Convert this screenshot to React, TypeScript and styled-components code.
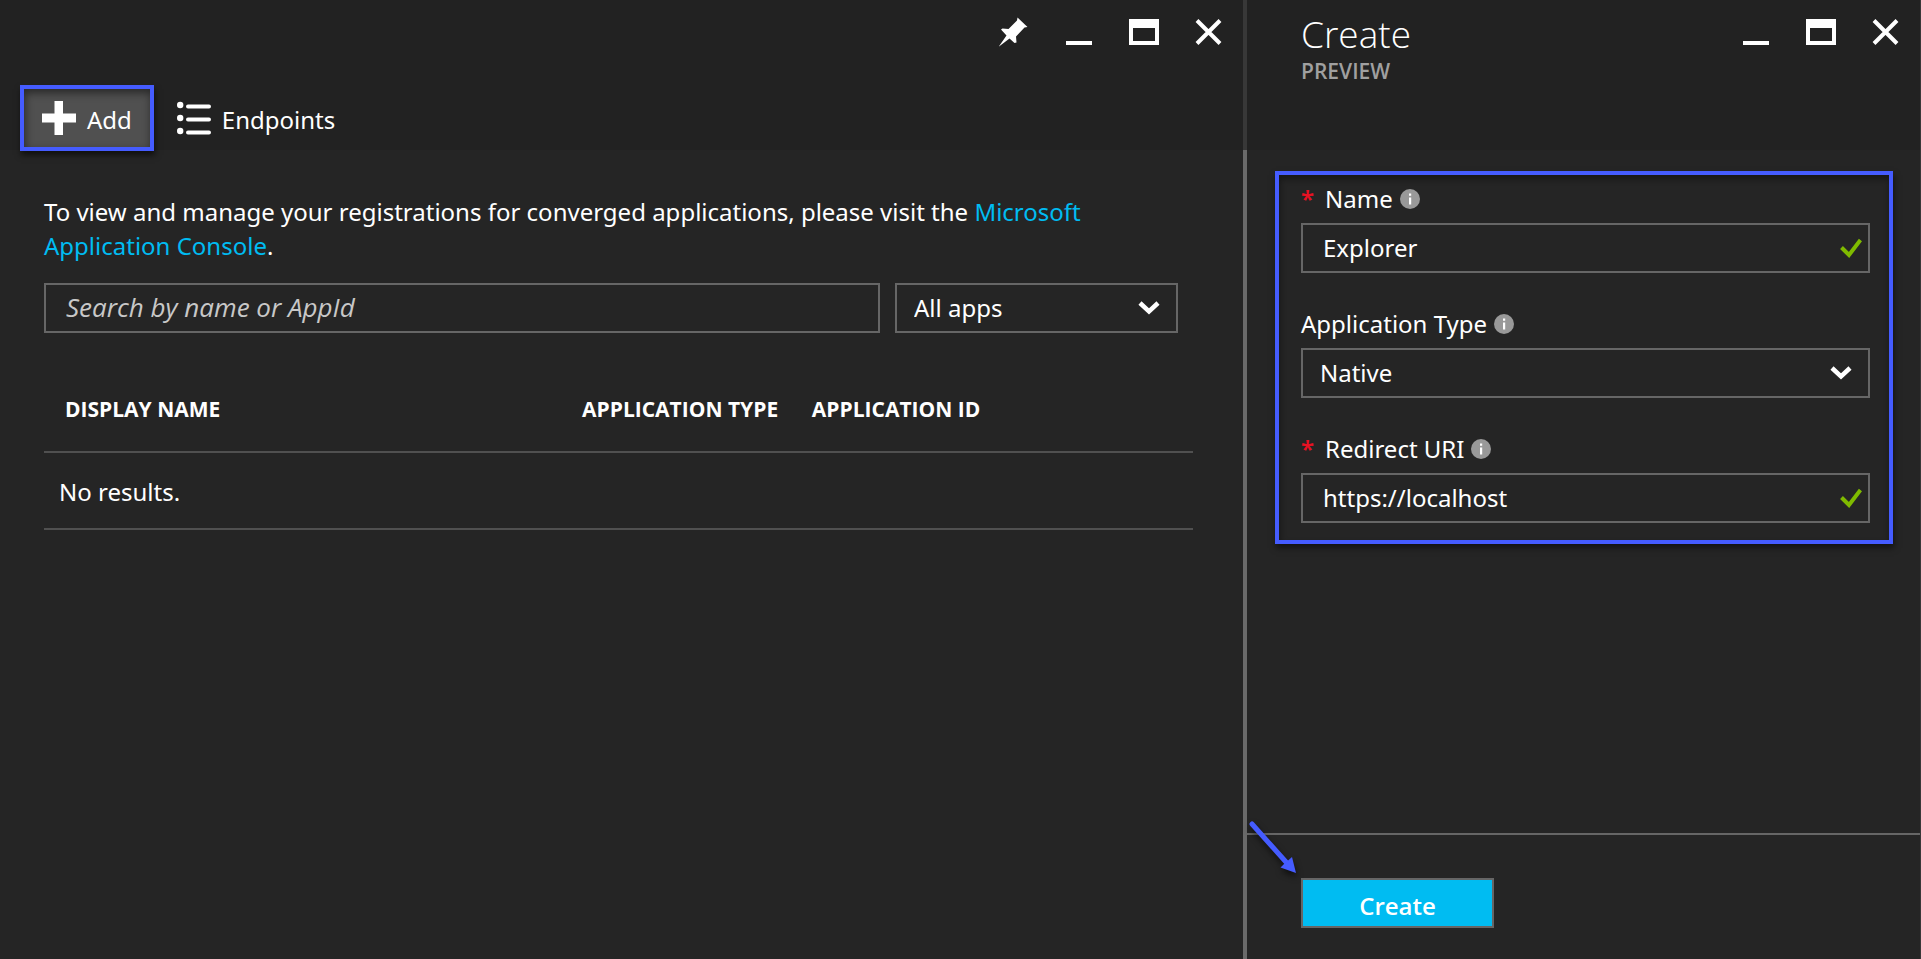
import React from "react";
import styled, { createGlobalStyle } from "styled-components";

const GlobalStyle = createGlobalStyle`
  * { box-sizing: border-box; }
  body {
    margin: 0;
    background: #252525;
    color: #fff;
    font-family: "Segoe UI", "Noto Sans", "Open Sans", sans-serif;
    font-size: 24px;
    line-height: 34px;
  }
  button, input, select { font: inherit; color: inherit; }
`;

const Portal = styled.div`
  display: grid;
  grid-template-columns: minmax(0, 1243fr) minmax(0, 678fr);
  min-height: 100vh;
`;

const Blade = styled.section<{ $divided?: boolean }>`
  display: flex;
  flex-direction: column;
  border-left: ${(p) => (p.$divided ? "4px solid #6a6a6a" : "0")};
  border-right: ${(p) => (p.$divided ? "1px solid #383838" : "0")};
`;

const Header = styled.header<{ $divided?: boolean }>`
  position: relative;
  height: 150px;
  background: #222;
  margin-left: ${(p) => (p.$divided ? "-4px" : "0")};
  border-left: ${(p) => (p.$divided ? "4px solid #383838" : "0")};
`;

const TitleBar = styled.div`
  display: flex;
  justify-content: space-between;
  height: 85px;
  padding: 0 2px 0 54px;
`;

const Title = styled.h1`
  margin: 0;
  padding-top: 12px;
  font-family: "Segoe UI", "Open Sans", sans-serif;
  font-size: 37px;
  font-weight: 300;
  line-height: 44px;
`;

const Subtitle = styled.p`
  margin: 0;
  color: #a0a0a0;
  font-family: "Segoe UI", "Open Sans", sans-serif;
  font-size: 21px;
  font-weight: 600;
  line-height: 30px;
`;

const Controls = styled.div`
  display: flex;
  height: 64px;
  margin-left: auto;
`;

const IconButton = styled.button`
  display: flex;
  align-items: center;
  justify-content: center;
  width: 65px;
  padding: 0;
  border: 0;
  background: none;
  cursor: pointer;
`;

const Toolbar = styled.div`
  display: flex;
  gap: 4px;
  padding-left: 20px;
`;

const Command = styled.button<{ $marked?: boolean }>`
  display: flex;
  align-items: center;
  gap: 11px;
  height: 66px;
  padding: 0 ${(p) => (p.$marked ? "18px" : "19px")};
  border: ${(p) => (p.$marked ? "4px solid #455cff" : "0")};
  background: ${(p) => (p.$marked ? "#505050" : "none")};
  box-shadow: ${(p) =>
    p.$marked
      ? "1px 4px 6px rgba(0, 0, 0, 0.6), inset 1px 4px 8px rgba(0, 0, 0, 0.5)"
      : "none"};
  cursor: pointer;
`;

const CommandText = styled.span`
  padding-top: 3px;
`;

const Content = styled.div`
  padding: 45px 50px 0 44px;
`;

const Intro = styled.p`
  max-width: 1100px;
  margin: 0;
`;

const Link = styled.a`
  color: #00bcf2;
  text-decoration: none;
`;

const Filters = styled.div`
  display: grid;
  grid-template-columns: minmax(0, 836fr) minmax(0, 283fr);
  gap: 15px;
  padding: 20px 15px 0 0;
`;

const Field = styled.div`
  position: relative;
  display: flex;
`;

const TextInput = styled.input`
  width: 100%;
  height: 50px;
  padding: 0 50px 2px 20px;
  border: 2px solid #666;
  border-radius: 0;
  background: #252525;
  outline: 0;
  &:focus { border-color: #00bcf2; }
  &::placeholder {
    color: #c8c8c8;
    font-style: italic;
    opacity: 1;
  }
`;

const SearchInput = styled(TextInput)`
  font-family: "Segoe UI", "Open Sans", sans-serif;
  font-size: 26px;
`;

const Select = styled.select`
  width: 100%;
  height: 50px;
  padding: 0 50px 0 17px;
  border: 2px solid #666;
  border-radius: 0;
  background: #252525;
  appearance: none;
  outline: 0;
  &:focus { border-color: #00bcf2; }
`;

const FieldIcon = styled.span<{ $right: number }>`
  position: absolute;
  top: 0;
  bottom: 0;
  right: ${(p) => p.$right}px;
  display: flex;
  align-items: center;
  pointer-events: none;
`;

const Table = styled.table`
  width: 100%;
  margin-top: 37px;
  border-collapse: collapse;
  table-layout: fixed;
`;

const HeadCell = styled.th<{ $width?: string }>`
  width: ${(p) => p.$width ?? "auto"};
  height: 82px;
  padding: 0 0 4px 21px;
  border-bottom: 2px solid #505050;
  font-family: "Segoe UI", "Open Sans", sans-serif;
  font-size: 21px;
  font-weight: 700;
  text-align: left;
  white-space: nowrap;
`;

const Cell = styled.td`
  height: 77px;
  padding: 2px 0 0 15px;
  border-bottom: 2px solid #505050;
`;

const Form = styled.form`
  display: flex;
  flex: 1;
  flex-direction: column;
  justify-content: space-between;
`;

const MarkedFields = styled.div`
  display: flex;
  flex-direction: column;
  gap: 35px;
  margin: 21px 27px 21px 28px;
  padding: 8px 19px 17px 22px;
  border: 4px solid #455cff;
  box-shadow: 1px 4px 6px rgba(0, 0, 0, 0.5), inset 1px 4px 6px rgba(0, 0, 0, 0.4);
`;

const LabelRow = styled.div`
  display: flex;
  align-items: center;
  height: 40px;
  padding-bottom: 8px;
`;

const Required = styled.span`
  width: 24px;
  color: #e81123;
  font-weight: 600;
`;

const Info = styled.span`
  display: flex;
  margin-left: 7px;
`;

const Footer = styled.footer`
  position: relative;
  padding: 43px 54px 31px;
  border-top: 2px solid #666;
`;

const CreateButton = styled.button`
  width: 193px;
  height: 50px;
  padding: 6px 0 0;
  border: 2px solid #666;
  background: #00bcf2;
  font-family: "Segoe UI", "Open Sans", sans-serif;
  font-weight: 600;
  line-height: 40px;
  cursor: pointer;
`;

const Pointer = styled.svg`
  position: absolute;
  top: -18px;
  left: -2px;
  filter: drop-shadow(1px 4px 3px rgba(0, 0, 0, 0.6));
`;

const PinIcon = () => (
  <svg width="30" height="30" viewBox="0 0 30 30" fill="#fff" aria-hidden="true">
    <path d="M18.500 0.500L28.500 10L25.500 10.500L17 19.500L17.500 25.500L15.500 26L10.500 21.500L-0.500 30L7.500 18.500L2 12.500L3.500 11.500L9.500 12L18 3.500Z" />
  </svg>
);

const MinimizeIcon = () => (
  <svg width="30" height="30" viewBox="0 0 30 30" fill="#fff" aria-hidden="true">
    <rect x="2" y="24" width="26" height="4" />
  </svg>
);

const MaximizeIcon = () => (
  <svg width="30" height="30" viewBox="0 0 30 30" fill="#fff" aria-hidden="true">
    <path fillRule="evenodd" d="M0 2H30V28H0ZM4 11V24H26V11Z" />
  </svg>
);

const CloseIcon = () => (
  <svg width="30" height="30" viewBox="0 0 30 30" stroke="#fff" strokeWidth="4" aria-hidden="true">
    <path d="M3 3.500L26 26.500M26 3.500L3 26.500" />
  </svg>
);

const PlusIcon = () => (
  <svg width="34" height="34" viewBox="0 0 34 34" fill="#fff" aria-hidden="true">
    <path d="M12.500 0H21V12.500H34V21.500H21V34H12.500V21.500H0V12.500H12.500Z" />
  </svg>
);

const ListIcon = () => (
  <svg width="34" height="34" viewBox="0 0 34 34" fill="#fff" aria-hidden="true">
    {[5, 18, 31].map((y) => (
      <g key={y}>
        <circle cx="3.200" cy={y - 1} r="3.200" />
        <rect x="9" y={y - 1.5} width="25" height="4" rx="2" />
      </g>
    ))}
  </svg>
);

const ChevronIcon = () => (
  <svg width="22" height="14" viewBox="0 0 22 14" fill="none" stroke="#fff" strokeWidth="4.500" aria-hidden="true">
    <path d="M2 2L11 10.500L20 2" />
  </svg>
);

const CheckIcon = () => (
  <svg width="22" height="20" viewBox="0 0 22 20" fill="none" stroke="#7fba00" strokeWidth="4" aria-hidden="true">
    <path d="M1.500 9.500L9 17L20.500 2" />
  </svg>
);

const InfoIcon = () => (
  <Info title="More information">
    <svg width="20" height="20" viewBox="0 0 20 20" aria-hidden="true">
      <circle cx="10" cy="10" r="10" fill="#999" />
      <path d="M9 4.500h2.200v2.200h-2.200zM9 8.500h2.200v7h-2.200z" fill="#fff" />
    </svg>
  </Info>
);

function WindowControls({ pinnable }: { pinnable?: boolean }) {
  return (
    <Controls>
      {pinnable && (
        <IconButton type="button" aria-label="Pin"><PinIcon /></IconButton>
      )}
      <IconButton type="button" aria-label="Minimize"><MinimizeIcon /></IconButton>
      <IconButton type="button" aria-label="Maximize"><MaximizeIcon /></IconButton>
      <IconButton type="button" aria-label="Close"><CloseIcon /></IconButton>
    </Controls>
  );
}

interface FormFieldProps {
  id: string;
  label: string;
  required?: boolean;
  children: React.ReactNode;
}

function FormField({ id, label, required, children }: FormFieldProps) {
  return (
    <div>
      <LabelRow>
        {required && <Required>*</Required>}
        <label htmlFor={id}>{label}</label>
        <InfoIcon />
      </LabelRow>
      <Field>{children}</Field>
    </div>
  );
}

function RegistrationsBlade() {
  return (
    <Blade>
      <Header>
        <TitleBar>
          <WindowControls pinnable />
        </TitleBar>
        <Toolbar>
          <Command type="button" $marked>
            <PlusIcon />
            <CommandText>Add</CommandText>
          </Command>
          <Command type="button">
            <ListIcon />
            <CommandText>Endpoints</CommandText>
          </Command>
        </Toolbar>
      </Header>
      <Content>
        <Intro>
          To view and manage your registrations for converged applications, please visit the{" "}
          <Link href="#console">Microsoft Application Console</Link>.
        </Intro>
        <Filters>
          <SearchInput type="search" aria-label="Search" placeholder="Search by name or AppId" />
          <Field>
            <Select aria-label="Filter" defaultValue="all">
              <option value="all">All apps</option>
              <option value="mine">My apps</option>
            </Select>
            <FieldIcon $right={18}><ChevronIcon /></FieldIcon>
          </Field>
        </Filters>
        <Table>
          <thead>
            <tr>
              <HeadCell $width="45%">DISPLAY NAME</HeadCell>
              <HeadCell $width="20%">APPLICATION TYPE</HeadCell>
              <HeadCell>APPLICATION ID</HeadCell>
            </tr>
          </thead>
          <tbody>
            <tr>
              <Cell colSpan={3}>No results.</Cell>
            </tr>
          </tbody>
        </Table>
      </Content>
    </Blade>
  );
}

function CreateBlade() {
  return (
    <Blade $divided>
      <Header $divided>
        <TitleBar>
          <div>
            <Title>Create</Title>
            <Subtitle>PREVIEW</Subtitle>
          </div>
          <WindowControls />
        </TitleBar>
      </Header>
      <Form onSubmit={(e) => e.preventDefault()}>
        <MarkedFields>
          <FormField id="name" label="Name" required>
            <TextInput id="name" defaultValue="Explorer" />
            <FieldIcon $right={8}><CheckIcon /></FieldIcon>
          </FormField>
          <FormField id="type" label="Application Type">
            <Select id="type" defaultValue="native">
              <option value="native">Native</option>
              <option value="web">Web app / API</option>
            </Select>
            <FieldIcon $right={18}><ChevronIcon /></FieldIcon>
          </FormField>
          <FormField id="uri" label="Redirect URI" required>
            <TextInput id="uri" defaultValue="https://localhost" />
            <FieldIcon $right={8}><CheckIcon /></FieldIcon>
          </FormField>
        </MarkedFields>
        <Footer>
          <CreateButton type="submit">Create</CreateButton>
          <Pointer width="60" height="64" viewBox="0 0 60 64" aria-hidden="true">
            <path d="M7 7L41 45" stroke="#455cff" strokeWidth="5" strokeLinecap="round" />
            <path d="M51 56L47 40L42.500 44L39 47L35.500 50.500Z" fill="#455cff" />
          </Pointer>
        </Footer>
      </Form>
    </Blade>
  );
}

export default function App() {
  return (
    <>
      <GlobalStyle />
      <Portal>
        <RegistrationsBlade />
        <CreateBlade />
      </Portal>
    </>
  );
}
